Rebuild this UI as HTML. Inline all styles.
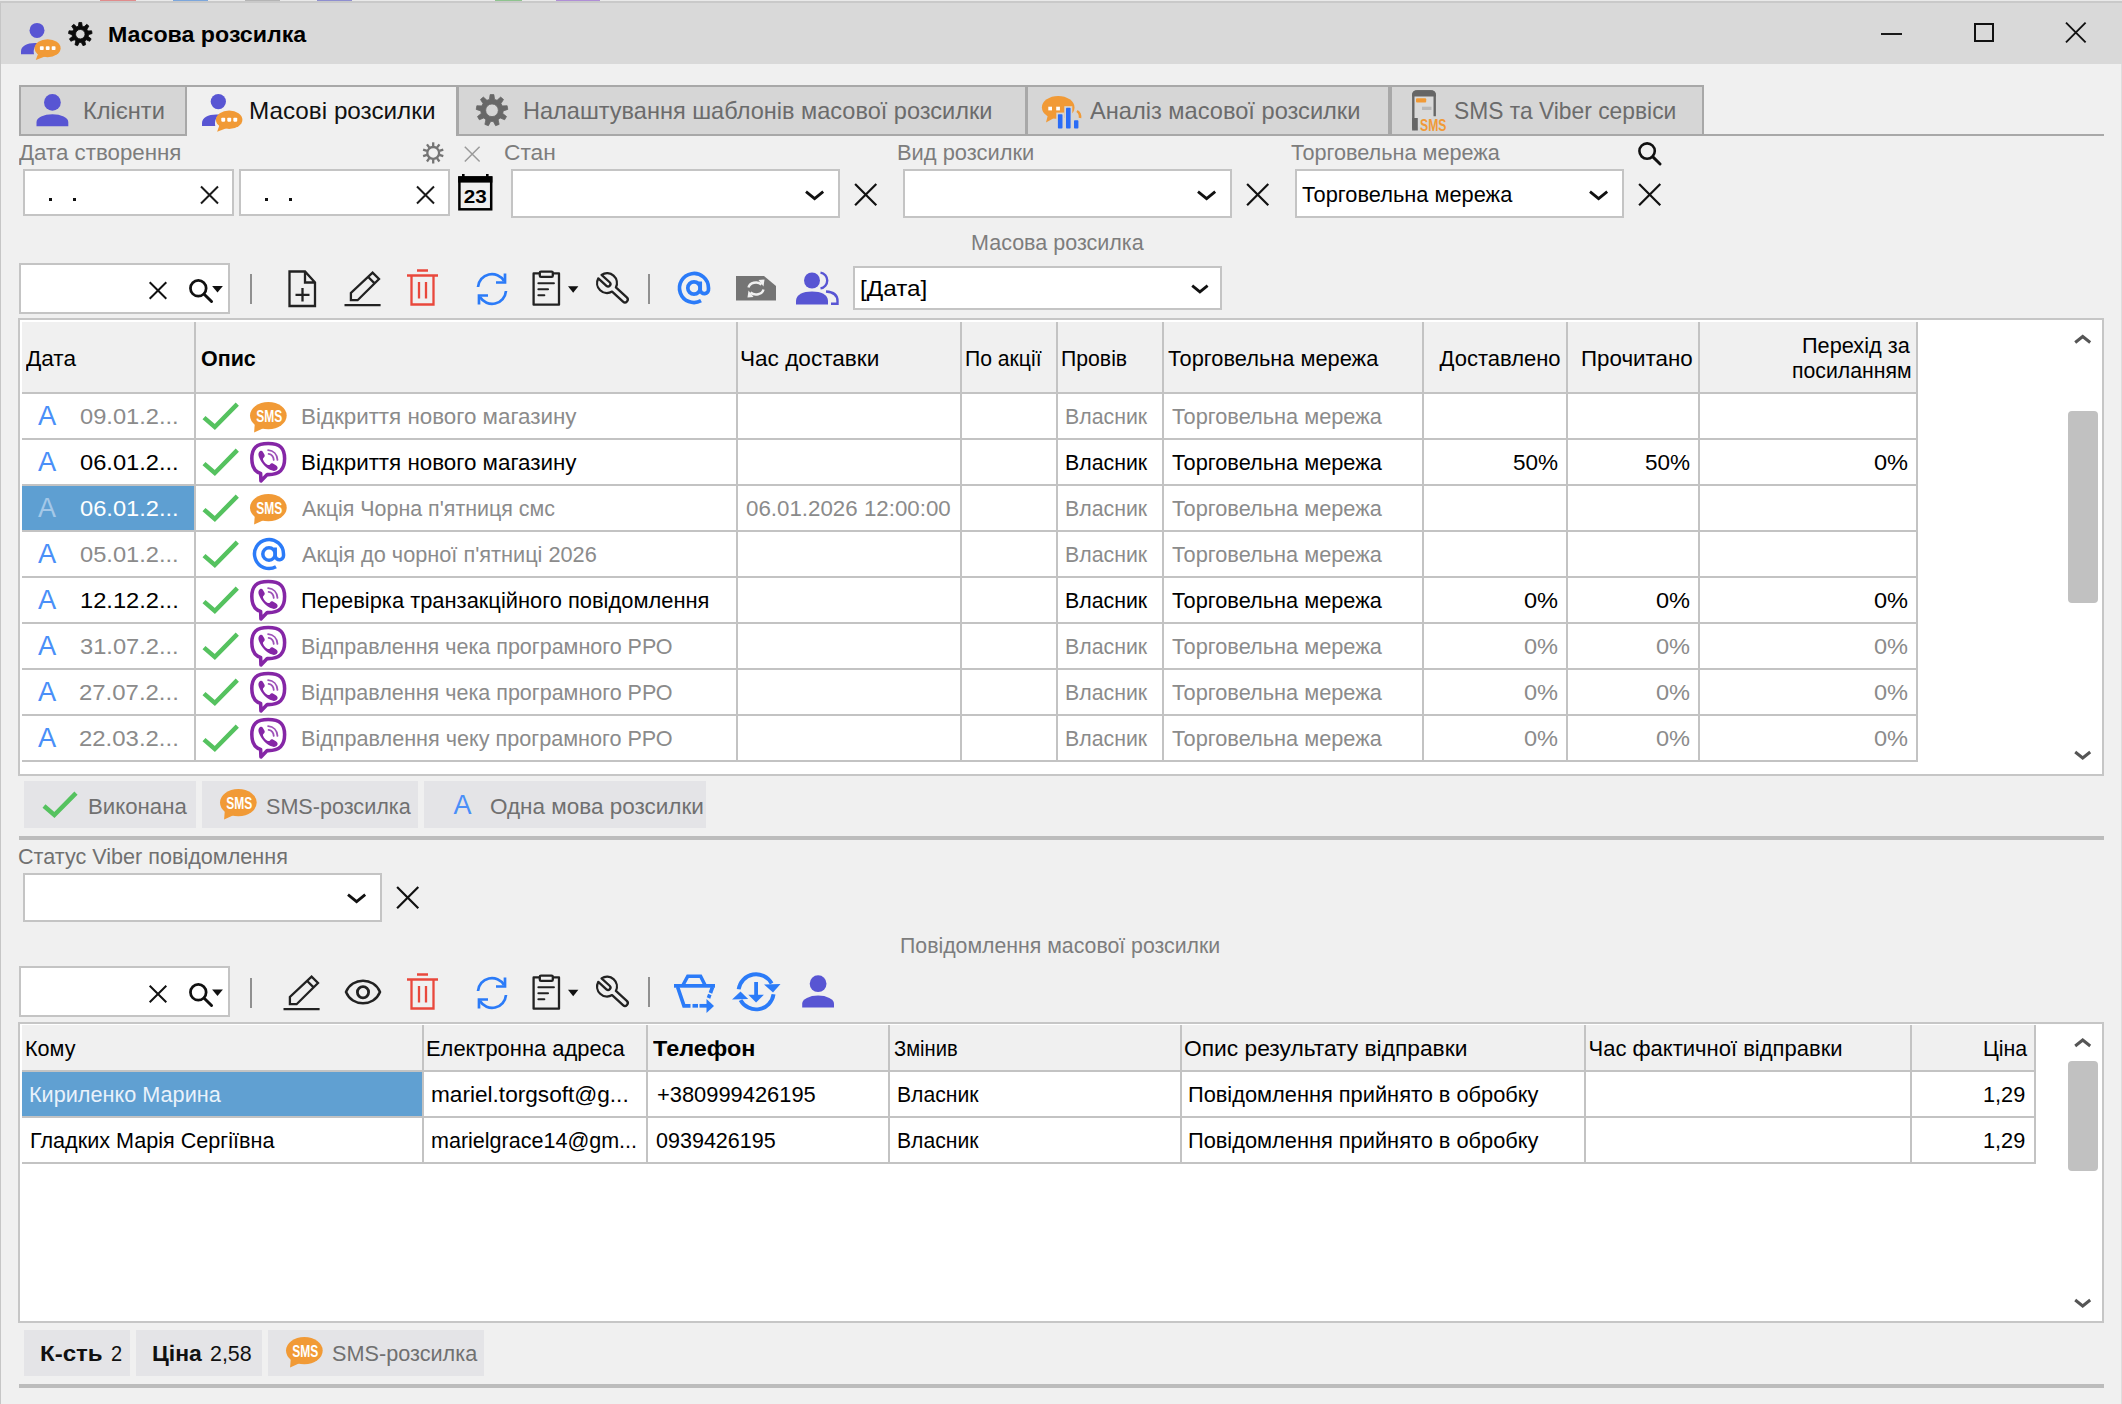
<!DOCTYPE html>
<html lang="uk"><head><meta charset="utf-8"><title>Масова розсилка</title>
<style>
html,body{margin:0;padding:0}
body{width:2122px;height:1404px;overflow:hidden;background:#f0f0f0;font-family:"Liberation Sans","DejaVu Sans",sans-serif;position:relative}
svg{overflow:visible}
.t{position:absolute;white-space:nowrap;transform-origin:0 50%}
.inp{position:absolute;background:#fff;border:2px solid #c4c4c4;box-sizing:border-box}
</style></head><body>

<div style="position:absolute;left:0px;top:0px;width:2122px;height:1px;background:#e9e9e9"></div>
<div style="position:absolute;left:0px;top:1px;width:2122px;height:2px;background:#c9c9c9"></div>
<div style="position:absolute;left:100px;top:0px;width:36px;height:1px;background:#e08c8c"></div>
<div style="position:absolute;left:173px;top:0px;width:35px;height:1px;background:#7da7dc"></div>
<div style="position:absolute;left:245px;top:0px;width:35px;height:1px;background:#b5b5b5"></div>
<div style="position:absolute;left:317px;top:0px;width:35px;height:1px;background:#8f8fd0"></div>
<div style="position:absolute;left:495px;top:0px;width:27px;height:1px;background:#8fc48f"></div>
<div style="position:absolute;left:556px;top:0px;width:44px;height:1px;background:#b08fd6"></div>
<div style="position:absolute;left:0px;top:3px;width:2122px;height:61px;background:#d9d9d9"></div>
<div style="position:absolute;left:0px;top:3px;width:1px;height:1404px;background:#c6c6c6"></div>
<div style="position:absolute;left:2120.5px;top:64px;width:1.5px;height:1404px;background:#dedede"></div>
<svg style="position:absolute;left:20px;top:22px" width="40" height="40" viewBox="0 0 40 40"><circle cx="17" cy="8.400" r="7.500" fill="#5855d3"/><path d="M1 32.300 V29.500 C1 24 7 21 15 21 L19 21 C15 23 13 27 14 32.300 Z" fill="#5855d3"/><ellipse cx="27.600" cy="26.200" rx="13" ry="9" fill="#f19a36"/><path d="M18.500 30.500 L15.800 38 L25.500 34.200 Z" fill="#f19a36"/><rect x="19.900" y="24.300" width="3.800" height="3.800" rx="0.8" fill="#fff"/><rect x="25.800" y="24.300" width="3.800" height="3.800" rx="0.8" fill="#fff"/><rect x="31.700" y="24.300" width="3.800" height="3.800" rx="0.8" fill="#fff"/></svg>
<svg style="position:absolute;left:67px;top:21px" width="27" height="27" viewBox="67 21 27 27"><path fill-rule="evenodd" d="M78.9 22.48 L81.7 22.48 L82.19 26.16 L84.02 26.83 L86.76 24.33 L88.9 26.12 L86.91 29.25 L87.89 30.95 L91.6 30.79 L92.08 33.54 L88.55 34.66 L88.21 36.59 L91.15 38.85 L89.75 41.27 L86.32 39.85 L84.82 41.11 L85.62 44.73 L82.99 45.69 L81.28 42.4 L79.32 42.4 L77.61 45.69 L74.98 44.73 L75.78 41.11 L74.28 39.85 L70.85 41.27 L69.45 38.85 L72.39 36.59 L72.05 34.66 L68.52 33.54 L69 30.79 L72.71 30.95 L73.69 29.25 L71.7 26.12 L73.84 24.33 L76.58 26.83 L78.41 26.16 Z M85.02 34.2 A4.72 4.72 0 1 0 75.58 34.2 A4.72 4.72 0 1 0 85.02 34.2 Z" fill="#0a0a0a" stroke="#0a0a0a" stroke-width="0.8" stroke-linejoin="round"/></svg>
<div class="t" style="left:107.95px;top:21px;font-size:22px;line-height:28px;color:#000;font-weight:bold;transform:scaleX(1.0543);">Масова розсилка</div>
<div style="position:absolute;left:1881px;top:33px;width:21px;height:2px;background:#1a1a1a"></div>
<div style="position:absolute;left:1973.7px;top:22.5px;width:20.2px;height:19.7px;border:2px solid #111;box-sizing:border-box"></div>
<svg style="position:absolute;left:2064px;top:20px" width="24" height="24" viewBox="2064 20 24 24"><path d="M2066 22.7 L2085.6 42.3 M2085.6 22.7 L2066 42.3" stroke="#111" stroke-width="1.9" fill="none"/></svg>
<div style="position:absolute;left:18.5px;top:134.3px;width:2085px;height:2px;background:#a8a8a8"></div>
<div style="position:absolute;left:18.5px;top:84.5px;width:168.5px;height:51.5px;background:#d6d6d6;border:2px solid #a8a8a8;box-sizing:border-box"></div>
<div style="position:absolute;left:185px;top:84.5px;width:273px;height:51.5px;background:#f0f0f0;border:2px solid #a8a8a8;border-bottom:none;box-sizing:border-box"></div>
<div style="position:absolute;left:457px;top:84.5px;width:570px;height:51.5px;background:#d6d6d6;border:2px solid #a8a8a8;box-sizing:border-box"></div>
<div style="position:absolute;left:1025.7px;top:84.5px;width:364.7px;height:51.5px;background:#d6d6d6;border:2px solid #a8a8a8;box-sizing:border-box"></div>
<div style="position:absolute;left:1389.8px;top:84.5px;width:313.9px;height:51.5px;background:#d6d6d6;border:2px solid #a8a8a8;box-sizing:border-box"></div>
<svg style="position:absolute;left:34px;top:92px" width="36" height="40" viewBox="34 92 36 40"><circle cx="52.4" cy="102.4" r="8.4" fill="#5855d3"/><path d="M36.5 126.3 V122.2 A15.9 7.9 0 0 1 68.3 122.2 V126.3 Z" fill="#5855d3"/></svg>
<div class="t" style="left:83.02px;top:95.5px;font-size:24px;line-height:30px;color:#6b6b6b;transform:scaleX(0.9838);">Клієнти</div>
<svg style="position:absolute;left:201px;top:93px" width="40.8" height="40.8" viewBox="0 0 40 40"><circle cx="17" cy="8.400" r="7.500" fill="#5855d3"/><path d="M1 32.300 V29.500 C1 24 7 21 15 21 L19 21 C15 23 13 27 14 32.300 Z" fill="#5855d3"/><ellipse cx="27.600" cy="26.200" rx="13" ry="9" fill="#f19a36"/><path d="M18.500 30.500 L15.800 38 L25.500 34.200 Z" fill="#f19a36"/><rect x="19.900" y="24.300" width="3.800" height="3.800" rx="0.8" fill="#fff"/><rect x="25.800" y="24.300" width="3.800" height="3.800" rx="0.8" fill="#fff"/><rect x="31.700" y="24.300" width="3.800" height="3.800" rx="0.8" fill="#fff"/></svg>
<div class="t" style="left:248.99px;top:95.5px;font-size:24px;line-height:30px;color:#111;transform:scaleX(1.0107);">Масові розсилки</div>
<svg style="position:absolute;left:475px;top:93px" width="35" height="35" viewBox="475 93 35 35"><path fill-rule="evenodd" d="M490.13 94.61 L493.87 94.61 L494.56 99.38 L497.06 100.29 L500.65 97.08 L503.52 99.48 L500.98 103.58 L502.31 105.88 L507.13 105.73 L507.78 109.42 L503.2 110.93 L502.74 113.54 L506.52 116.52 L504.65 119.76 L500.18 117.98 L498.14 119.69 L499.12 124.4 L495.61 125.68 L493.33 121.44 L490.67 121.44 L488.39 125.68 L484.88 124.4 L485.86 119.69 L483.82 117.98 L479.35 119.76 L477.48 116.52 L481.26 113.54 L480.8 110.93 L476.22 109.42 L476.87 105.73 L481.69 105.88 L483.02 103.58 L480.48 99.48 L483.35 97.08 L486.94 100.29 L489.44 99.38 Z M498.32 110.3 A6.32 6.32 0 1 0 485.68 110.3 A6.32 6.32 0 1 0 498.32 110.3 Z" fill="#686868" stroke="#686868" stroke-width="0.8" stroke-linejoin="round"/></svg>
<div class="t" style="left:523.02px;top:95.5px;font-size:24px;line-height:30px;color:#6b6b6b;transform:scaleX(0.9808);">Налаштування шаблонів масової розсилки</div>
<svg style="position:absolute;left:1040px;top:94px" width="44" height="38" viewBox="1040 94 44 38"><ellipse cx="1058.200" cy="107.400" rx="16.300" ry="11.400" fill="#f19a36"/><path d="M1048 114.500 L1046 122.600 L1055 117.500 Z" fill="#f19a36"/><path d="M1077 111 C1079.500 112.500 1080.300 115 1080 118" fill="none" stroke="#f19a36" stroke-width="2.600"/><rect x="1056.300" y="112.600" width="8" height="17" fill="#d6d6d6"/><rect x="1064.300" y="106.200" width="8" height="24" fill="#d6d6d6"/><rect x="1072.300" y="118.600" width="7.800" height="11" fill="#d6d6d6"/><rect x="1048.300" y="106.700" width="3.700" height="3.700" fill="#fff"/><rect x="1056.200" y="106.700" width="3.700" height="3.700" fill="#fff"/><rect x="1057.900" y="114.200" width="4.600" height="14.300" rx="0.800" fill="#2a6cf6"/><rect x="1066" y="107.800" width="4.600" height="20.700" rx="0.800" fill="#2a6cf6"/><rect x="1074" y="120.200" width="4.400" height="8.300" rx="0.800" fill="#2a6cf6"/></svg>
<div class="t" style="left:1090px;top:95.5px;font-size:24px;line-height:30px;color:#6b6b6b;transform:scaleX(0.9842);">Аналіз масової розсилки</div>
<svg style="position:absolute;left:1408px;top:86px" width="44" height="48" viewBox="1408 86 44 48"><path d="M1413.300 130.600 V95 C1413.300 92.800 1414.800 91.500 1417.300 91.500 H1430.700 C1433.200 91.500 1434.700 92.800 1434.700 95 V116.300" fill="#dadada" stroke="#666" stroke-width="2.400"/><path d="M1413.300 95.200 V95 C1413.300 92.800 1414.800 91.500 1417.300 91.500 H1430.700 C1433.200 91.500 1434.700 92.800 1434.700 95 V95.200 Z" fill="#666" stroke="#666" stroke-width="2.400"/><path d="M1412.100 118 H1417.800 V130.600 H1414.500 L1412.100 128 Z" fill="#666"/><rect x="1416" y="98.200" width="10.200" height="4.400" rx="1" fill="#f19a36"/><rect x="1422" y="106.700" width="9.500" height="3.300" fill="#b9b9b9"/><text x="1433.200" y="130.600" font-family="Liberation Sans,sans-serif" font-weight="bold" font-size="17.400" fill="#f19a36" text-anchor="middle" textLength="26.400" lengthAdjust="spacingAndGlyphs">SMS</text></svg>
<div class="t" style="left:1454.05px;top:95.5px;font-size:24px;line-height:30px;color:#6b6b6b;transform:scaleX(0.9505);">SMS та Viber сервіси</div>
<div class="t" style="left:19px;top:139px;font-size:22px;line-height:28px;color:#7d7d7d;transform:scaleX(1.0135);">Дата створення</div>
<svg style="position:absolute;left:421px;top:140px" width="24" height="24" viewBox="421 140 24 24"><circle cx="433.2" cy="152.9" r="5.9" fill="none" stroke="#747474" stroke-width="2.3"/><path d="M433.2 146.4 L433.2 142.3" stroke="#747474" stroke-width="2.3"/><path d="M437.02 147.64 L439.43 144.32" stroke="#747474" stroke-width="2.3"/><path d="M439.38 150.89 L443.28 149.62" stroke="#747474" stroke-width="2.3"/><path d="M439.38 154.91 L443.28 156.18" stroke="#747474" stroke-width="2.3"/><path d="M437.02 158.16 L439.43 161.48" stroke="#747474" stroke-width="2.3"/><path d="M433.2 159.4 L433.2 163.5" stroke="#747474" stroke-width="2.3"/><path d="M429.38 158.16 L426.97 161.48" stroke="#747474" stroke-width="2.3"/><path d="M427.02 154.91 L423.12 156.18" stroke="#747474" stroke-width="2.3"/><path d="M427.02 150.89 L423.12 149.62" stroke="#747474" stroke-width="2.3"/><path d="M429.38 147.64 L426.97 144.32" stroke="#747474" stroke-width="2.3"/></svg>
<svg style="position:absolute;left:462px;top:144px" width="19" height="19" viewBox="462 144 19 19"><path d="M464.8 146.7 L479.6 161.5 M479.6 146.7 L464.8 161.5" stroke="#9a9a9a" stroke-width="1.5" fill="none"/></svg>
<div class="t" style="left:504.47px;top:139px;font-size:22px;line-height:28px;color:#7d7d7d;transform:scaleX(1.0323);">Стан</div>
<div class="t" style="left:896.51px;top:139px;font-size:22px;line-height:28px;color:#7d7d7d;transform:scaleX(0.9946);">Вид розсилки</div>
<div class="t" style="left:1290.5px;top:139px;font-size:22px;line-height:28px;color:#7d7d7d;transform:scaleX(0.9835);">Торговельна мережа</div>
<svg style="position:absolute;left:1637.3px;top:140.8px" width="25" height="25" viewBox="0 0 26 26"><circle cx="10.5" cy="10.500" r="8" fill="none" stroke="#111" stroke-width="2.7"/><path d="M16.5 16.500 L24 24" stroke="#111" stroke-width="3.0" stroke-linecap="round"/></svg>
<div class="inp" style="left:23px;top:169px;width:211px;height:46.5px"></div>
<div class="inp" style="left:239px;top:169px;width:211px;height:46.5px"></div>
<div style="position:absolute;left:48.5px;top:198.4px;width:3px;height:3px;background:#111"></div>
<div style="position:absolute;left:73px;top:198.4px;width:3px;height:3px;background:#111"></div>
<svg style="position:absolute;left:199px;top:184px" width="21" height="21" viewBox="199 184 21 21"><path d="M201 186.5 L218 203.5 M218 186.5 L201 203.5" stroke="#1a1a1a" stroke-width="2" fill="none"/></svg>
<div style="position:absolute;left:264.5px;top:198.4px;width:3px;height:3px;background:#111"></div>
<div style="position:absolute;left:289px;top:198.4px;width:3px;height:3px;background:#111"></div>
<svg style="position:absolute;left:415px;top:184px" width="21" height="21" viewBox="415 184 21 21"><path d="M417 186.5 L434 203.5 M434 186.5 L417 203.5" stroke="#1a1a1a" stroke-width="2" fill="none"/></svg>
<svg style="position:absolute;left:456px;top:172px" width="40" height="42" viewBox="456 172 40 42"><rect x="459.400" y="177.500" width="31.800" height="31.800" fill="#efefef" stroke="#000" stroke-width="2.500"/><rect x="458.200" y="176.300" width="34.200" height="6.300" fill="#000"/><rect x="462" y="174" width="2.600" height="3" fill="#000"/><rect x="486" y="174" width="2.600" height="3" fill="#000"/><text x="475.200" y="203.300" font-family="Liberation Sans,sans-serif" font-weight="bold" font-size="18.5" fill="#000" text-anchor="middle" textLength="23" lengthAdjust="spacingAndGlyphs">23</text></svg>
<div class="inp" style="left:511px;top:168.8px;width:329px;height:49px"></div>
<svg style="position:absolute;left:803px;top:185px" width="24" height="20" viewBox="803 185 24 20"><path d="M806 191.7 L814.6 198.7 L823.2 191.7" stroke="#111" stroke-width="2.8" fill="none"/></svg>
<svg style="position:absolute;left:853px;top:182px" width="26" height="26" viewBox="853 182 26 26"><path d="M855.1 184 L876.3 205.2 M876.3 184 L855.1 205.2" stroke="#111" stroke-width="2.2" fill="none"/></svg>
<div class="inp" style="left:903px;top:168.8px;width:329px;height:49px"></div>
<svg style="position:absolute;left:1195px;top:185px" width="24" height="20" viewBox="1195 185 24 20"><path d="M1198 191.7 L1206.6 198.7 L1215.2 191.7" stroke="#111" stroke-width="2.8" fill="none"/></svg>
<svg style="position:absolute;left:1245px;top:182px" width="26" height="26" viewBox="1245 182 26 26"><path d="M1247.1 184 L1268.3 205.2 M1268.3 184 L1247.1 205.2" stroke="#111" stroke-width="2.2" fill="none"/></svg>
<div class="inp" style="left:1295px;top:168.8px;width:329px;height:49px"></div>
<div class="t" style="left:1301.5px;top:181px;font-size:22px;line-height:28px;color:#000;transform:scaleX(0.9906);">Торговельна мережа</div>
<svg style="position:absolute;left:1587px;top:185px" width="24" height="20" viewBox="1587 185 24 20"><path d="M1590 191.7 L1598.6 198.7 L1607.2 191.7" stroke="#111" stroke-width="2.8" fill="none"/></svg>
<svg style="position:absolute;left:1637px;top:182px" width="26" height="26" viewBox="1637 182 26 26"><path d="M1639.1 184 L1660.3 205.2 M1660.3 184 L1639.1 205.2" stroke="#111" stroke-width="2.2" fill="none"/></svg>
<div class="t" style="left:971.02px;top:228.7px;font-size:22px;line-height:28px;color:#7d7d7d;transform:scaleX(0.9780);">Масова розсилка</div>
<div class="inp" style="left:18.5px;top:262.7px;width:211.7px;height:51.2px"></div>
<svg style="position:absolute;left:147px;top:280px" width="21" height="21" viewBox="147 280 21 21"><path d="M149.7 282.2 L166.3 298.8 M166.3 282.2 L149.7 298.8" stroke="#111" stroke-width="2" fill="none"/></svg>
<svg style="position:absolute;left:187.8px;top:278px" width="25.5" height="25.5" viewBox="0 0 26 26"><circle cx="10.5" cy="10.500" r="8" fill="none" stroke="#111" stroke-width="2.8"/><path d="M16.5 16.500 L24 24" stroke="#111" stroke-width="3.0" stroke-linecap="round"/></svg>
<svg style="position:absolute;left:211px;top:285px" width="13.8" height="9.4" viewBox="211 285 13.8 9.4"><path d="M212.1 286 L222.9 286 L217.5 292.4 Z" fill="#111"/></svg>
<div style="position:absolute;left:250.3px;top:274.2px;width:2px;height:30px;background:#909090"></div>
<svg style="position:absolute;left:288px;top:270px" width="30" height="38" viewBox="0 0 30 38"><path d="M1.5 1.500 H17 L27 12.500 V36 H1.5 Z M17 1.500 V12.500 H27" fill="none" stroke="#222" stroke-width="2.3" stroke-linejoin="miter"/><path d="M14.5 18 V31.500 M7.500 24.800 H21.500" stroke="#222" stroke-width="2.3"/></svg>
<svg style="position:absolute;left:345px;top:270px" width="38" height="38" viewBox="0 0 38 38"><path d="M5.900 30.200 V23 L27.600 2.700 L34 9 L12.600 30.200 Z M23.200 7 L29.600 13.400" fill="none" stroke="#222" stroke-width="2.3" stroke-linejoin="miter"/><path d="M-0.500 35.100 H35.600" stroke="#222" stroke-width="2.3"/></svg>
<svg style="position:absolute;left:407px;top:269px" width="31" height="38" viewBox="0 0 31 38"><path d="M0 6.500 H31 M10 1.500 H21 M4.500 6.500 V35.500 H26.500 V6.500 M12 13 V29.500 M19 13 V29.500" fill="none" stroke="#e9483c" stroke-width="2.3"/></svg>
<svg style="position:absolute;left:475px;top:272px" width="34" height="34" viewBox="0 0 34 34"><path d="M3 15 A14 14 0 0 1 29 9" fill="none" stroke="#2b7bf8" stroke-width="2.7"/><path d="M30 1.500 V10.500 H21" fill="none" stroke="#2b7bf8" stroke-width="2.7"/><path d="M31 19 A14 14 0 0 1 5 25" fill="none" stroke="#2b7bf8" stroke-width="2.7"/><path d="M4 32.500 V23.500 H13" fill="none" stroke="#2b7bf8" stroke-width="2.7"/></svg>
<svg style="position:absolute;left:530px;top:268px" width="34" height="40" viewBox="530 268 34 40"><g transform="translate(0 0)"><path d="M539.800 273.400 H533.600 V304.700 H559 V273.400 H552.800" fill="none" stroke="#222" stroke-width="2.3" stroke-linejoin="round"/><rect x="539.800" y="271.600" width="13" height="5.300" rx="1.200" fill="none" stroke="#222" stroke-width="2.3"/><path d="M538.400 283.200 H553.900 M538.400 289.300 H548 M538.400 295.300 H544.300" stroke="#222" stroke-width="2.1" stroke-linecap="round"/></g></svg>
<svg style="position:absolute;left:567px;top:285px" width="13.4" height="9.5" viewBox="567 285 13.4 9.5"><path d="M568 286.35 L578.4 286.35 L573.2 292.85 Z" fill="#111"/></svg>
<svg style="position:absolute;left:593px;top:269px" width="44" height="44" viewBox="593 269 44 44"><path d="M-9.6 -2.4 L1.4 -2.4 A2.4 2.4 0 0 1 1.4 2.4 L-9.6 2.4 A9.9 9.9 0 0 0 9.5 2.8 L24.3 2.8 A2.8 2.8 0 0 0 24.3 -2.8 L9.5 -2.8 A9.9 9.9 0 0 0 -9.6 -2.4 Z" fill="none" stroke="#222" stroke-width="2.3" stroke-linejoin="round" transform="translate(607 283.1) rotate(42.5)"/></svg>
<div style="position:absolute;left:648.3px;top:273.5px;width:2px;height:30px;background:#909090"></div>
<svg style="position:absolute;left:677px;top:271px" width="34" height="34" viewBox="0 0 34 34"><circle cx="17" cy="17" r="6.200" fill="none" stroke="#2b7bf8" stroke-width="3.7"/><path d="M23.200 10.500 V19 A4 4 0 0 0 31.500 18 V17 A14.500 14.500 0 1 0 24 29.700" fill="none" stroke="#2b7bf8" stroke-width="3.7" stroke-linecap="butt"/></svg>
<svg style="position:absolute;left:736px;top:276px" width="40" height="25" viewBox="0 0 40 25"><path d="M0 0 H28 L40 10 V24.500 H0 Z" fill="#747474"/><path d="M12.500 11.500 A7.500 6 0 0 1 25.500 8.500" fill="none" stroke="#f0f0f0" stroke-width="2.4"/><path d="M22.500 4 L28.500 3.500 L27.500 10.500 Z" fill="#f0f0f0"/><path d="M27.500 13.500 A7.500 6 0 0 1 14.500 16.500" fill="none" stroke="#f0f0f0" stroke-width="2.4"/><path d="M17.500 21 L11.500 21.500 L12.500 14.500 Z" fill="#f0f0f0"/></svg>
<svg style="position:absolute;left:796px;top:270.5px" width="44" height="35" viewBox="0 0 44 35"><path d="M24.5 1.600 A8 8 0 0 1 24.500 17.400" fill="none" stroke="#5855d3" stroke-width="2.4"/><path d="M30 20.500 C38 21 41.500 25 41.500 30 V32.800 H35" fill="none" stroke="#5855d3" stroke-width="2.4"/><circle cx="16" cy="9.500" r="8" fill="#5855d3"/><path d="M0 33.500 V30 C0 23.500 7 20.500 16 20.500 C25 20.500 32 23.500 32 30 V33.500 Z" fill="#5855d3"/></svg>
<div class="inp" style="left:853px;top:266px;width:369px;height:44px"></div>
<div class="t" style="left:859.9px;top:274.5px;font-size:22px;line-height:28px;color:#000;transform:scaleX(1.1049);">[Дата]</div>
<svg style="position:absolute;left:1189px;top:279px" width="22" height="19" viewBox="1189 279 22 19"><path d="M1192.2 285.65 L1199.9 291.95 L1207.6 285.65" stroke="#111" stroke-width="2.8" fill="none"/></svg>
<div style="position:absolute;left:18.2px;top:318px;width:2085.7px;height:457.5px;background:#fff;border:2px solid #c6c6c6;box-sizing:border-box"></div>
<div style="position:absolute;left:22px;top:322px;width:1894px;height:70px;background:#f0f0f0"></div>
<div style="position:absolute;left:194px;top:322px;width:2px;height:439px;background:#c3c3c3"></div>
<div style="position:absolute;left:736px;top:322px;width:2px;height:439px;background:#c3c3c3"></div>
<div style="position:absolute;left:960px;top:322px;width:2px;height:439px;background:#c3c3c3"></div>
<div style="position:absolute;left:1056px;top:322px;width:2px;height:439px;background:#c3c3c3"></div>
<div style="position:absolute;left:1162px;top:322px;width:2px;height:439px;background:#c3c3c3"></div>
<div style="position:absolute;left:1422px;top:322px;width:2px;height:439px;background:#c3c3c3"></div>
<div style="position:absolute;left:1566px;top:322px;width:2px;height:439px;background:#c3c3c3"></div>
<div style="position:absolute;left:1698px;top:322px;width:2px;height:439px;background:#c3c3c3"></div>
<div style="position:absolute;left:1916px;top:322px;width:2px;height:439px;background:#c3c3c3"></div>
<div style="position:absolute;left:22px;top:392px;width:1896px;height:2px;background:#c3c3c3"></div>
<div style="position:absolute;left:22px;top:438px;width:1896px;height:2px;background:#c3c3c3"></div>
<div style="position:absolute;left:22px;top:484px;width:1896px;height:2px;background:#c3c3c3"></div>
<div style="position:absolute;left:22px;top:530px;width:1896px;height:2px;background:#c3c3c3"></div>
<div style="position:absolute;left:22px;top:576px;width:1896px;height:2px;background:#c3c3c3"></div>
<div style="position:absolute;left:22px;top:622px;width:1896px;height:2px;background:#c3c3c3"></div>
<div style="position:absolute;left:22px;top:668px;width:1896px;height:2px;background:#c3c3c3"></div>
<div style="position:absolute;left:22px;top:714px;width:1896px;height:2px;background:#c3c3c3"></div>
<div style="position:absolute;left:22px;top:760px;width:1896px;height:2px;background:#c3c3c3"></div>
<div class="t" style="left:26.2px;top:345px;font-size:22px;line-height:28px;color:#000;transform:scaleX(1.0267);">Дата</div>
<div class="t" style="left:200.5px;top:345px;font-size:22px;line-height:28px;color:#000;font-weight:bold;transform:scaleX(0.9745);">Опис</div>
<div class="t" style="left:740.47px;top:345px;font-size:22px;line-height:28px;color:#000;transform:scaleX(1.0265);">Час доставки</div>
<div class="t" style="left:964.54px;top:345px;font-size:22px;line-height:28px;color:#000;transform:scaleX(0.9617);">По акції</div>
<div class="t" style="left:1060.54px;top:345px;font-size:22px;line-height:28px;color:#000;transform:scaleX(0.9647);">Провів</div>
<div class="t" style="left:1167.5px;top:345px;font-size:22px;line-height:28px;color:#000;transform:scaleX(0.9906);">Торговельна мережа</div>
<div class="t" style="left:1439.5px;top:345px;font-size:22px;line-height:28px;color:#000;">Доставлено</div>
<div class="t" style="left:1580.98px;top:345px;font-size:22px;line-height:28px;color:#000;transform:scaleX(1.0160);">Прочитано</div>
<div class="t" style="left:1801.51px;top:331.5px;font-size:22px;line-height:28px;color:#000;transform:scaleX(0.9866);">Перехід за</div>
<div class="t" style="left:1791.53px;top:357px;font-size:22px;line-height:28px;color:#000;transform:scaleX(0.9653);">посиланням</div>
<div class="t" style="left:37.8px;top:401.1px;font-size:27px;line-height:30px;color:#4a8ff8;transform:scaleX(1.0111);">A</div>
<div class="t" style="left:80px;top:403.3px;font-size:22px;line-height:28px;color:#8b8b8b;transform:scaleX(1.0759);">09.01.2...</div>
<svg style="position:absolute;left:199.5px;top:399.8px" width="44" height="34" viewBox="199.5 399.8 44 34"><path d="M203.5 417.4 L214.3 426.8 L236.8 404" fill="none" stroke="#55c25f" stroke-width="4.5" stroke-linejoin="miter"/></svg>
<svg style="position:absolute;left:248px;top:400.2px" width="42" height="36" viewBox="248 400.2 42 36"><rect x="250" y="402.2" width="36.700" height="27.200" rx="18.300" ry="13.600" fill="#f19a36"/><path d="M255 421.2 L254.1 432.6 L265 427.7 Z" fill="#f19a36"/><text x="269.2" y="422.2" font-family="Liberation Sans,sans-serif" font-weight="bold" font-size="16.5" fill="#fff" text-anchor="middle" textLength="26" lengthAdjust="spacingAndGlyphs">SMS</text></svg>
<div class="t" style="left:300.98px;top:403.3px;font-size:22px;line-height:28px;color:#8b8b8b;transform:scaleX(1.0163);">Відкриття нового магазину</div>
<div class="t" style="left:1065.03px;top:403.3px;font-size:22px;line-height:28px;color:#8b8b8b;transform:scaleX(0.9681);">Власник</div>
<div class="t" style="left:1172px;top:403.3px;font-size:22px;line-height:28px;color:#8b8b8b;transform:scaleX(0.9887);">Торговельна мережа</div>
<div class="t" style="left:37.8px;top:447.1px;font-size:27px;line-height:30px;color:#4a8ff8;transform:scaleX(1.0111);">A</div>
<div class="t" style="left:80px;top:449.3px;font-size:22px;line-height:28px;color:#000;transform:scaleX(1.0759);">06.01.2...</div>
<svg style="position:absolute;left:199.5px;top:445.8px" width="44" height="34" viewBox="199.5 445.8 44 34"><path d="M203.5 463.4 L214.3 472.8 L236.8 450" fill="none" stroke="#55c25f" stroke-width="4.5" stroke-linejoin="miter"/></svg>
<svg style="position:absolute;left:248.4px;top:438.5px" width="42" height="46" viewBox="248.4 438.5 42 46"><g transform="translate(250.4 441.2) scale(1.012 1.022)"><path d="M18 1.800 C6 1.800 1.800 6.500 1.800 16.500 C1.800 25 5 29.500 10.500 31 L10.800 38.500 L17 32.200 C29.500 32.500 34.200 27 34.200 16.500 C34.200 6.500 30 1.800 18 1.800 Z" fill="#fff" stroke="#8526a6" stroke-width="3.500" stroke-linejoin="round"/><g transform="translate(17.900 18.300) scale(1.05) translate(-18.500 -17)"><path d="M11 8.300 C9.300 9.300 9 11.500 9.800 13.500 C12 19.500 16.500 24.200 22.500 26.500 C24.300 27.200 26.500 26.500 27.300 24.800 C27.800 23.500 27 22.300 25.800 21.600 L23 20 C22 19.500 21 19.800 20.500 20.500 C19.800 21.500 18.800 21.500 17.800 21 C15.800 19.800 14.500 18 13.800 16.300 C13.400 15.300 13.800 14.700 14.500 14.200 C15.500 13.500 15.500 12.500 15 11.500 L13.500 8.900 C12.900 7.900 11.800 7.800 11 8.300 Z" fill="#8526a6"/><path d="M18.500 7.500 C23.500 8 27 11.500 27.300 16.500 M19 11 C21.800 11.500 23.600 13.500 23.800 16.500" fill="none" stroke="#8526a6" stroke-width="1.700" stroke-linecap="round" opacity="0.8"/></g></g></svg>
<div class="t" style="left:300.98px;top:449.3px;font-size:22px;line-height:28px;color:#000;transform:scaleX(1.0163);">Відкриття нового магазину</div>
<div class="t" style="left:1065.03px;top:449.3px;font-size:22px;line-height:28px;color:#000;transform:scaleX(0.9681);">Власник</div>
<div class="t" style="left:1172px;top:449.3px;font-size:22px;line-height:28px;color:#000;transform:scaleX(0.9887);">Торговельна мережа</div>
<div class="t" style="left:1512.5px;top:449.3px;font-size:22px;line-height:28px;color:#000;transform:scaleX(1.0237);">50%</div>
<div class="t" style="left:1644.5px;top:449.3px;font-size:22px;line-height:28px;color:#000;transform:scaleX(1.0237);">50%</div>
<div class="t" style="left:1873.5px;top:449.3px;font-size:22px;line-height:28px;color:#000;transform:scaleX(1.0725);">0%</div>
<div style="position:absolute;left:22px;top:486px;width:172px;height:44px;background:#5e9fd2"></div>
<div class="t" style="left:38px;top:493.1px;font-size:27px;line-height:30px;color:#a4c8e8;">A</div>
<div class="t" style="left:80px;top:495.3px;font-size:22px;line-height:28px;color:#fff;transform:scaleX(1.0759);">06.01.2...</div>
<svg style="position:absolute;left:199.5px;top:491.8px" width="44" height="34" viewBox="199.5 491.8 44 34"><path d="M203.5 509.4 L214.3 518.8 L236.8 496" fill="none" stroke="#55c25f" stroke-width="4.5" stroke-linejoin="miter"/></svg>
<svg style="position:absolute;left:248px;top:492.2px" width="42" height="36" viewBox="248 492.2 42 36"><rect x="250" y="494.2" width="36.700" height="27.200" rx="18.300" ry="13.600" fill="#f19a36"/><path d="M255 513.2 L254.1 524.6 L265 519.7 Z" fill="#f19a36"/><text x="269.2" y="514.2" font-family="Liberation Sans,sans-serif" font-weight="bold" font-size="16.5" fill="#fff" text-anchor="middle" textLength="26" lengthAdjust="spacingAndGlyphs">SMS</text></svg>
<div class="t" style="left:302px;top:495.3px;font-size:22px;line-height:28px;color:#8b8b8b;transform:scaleX(0.9741);">Акція Чорна п'ятниця смс</div>
<div class="t" style="left:745.5px;top:495.3px;font-size:22px;line-height:28px;color:#8b8b8b;transform:scaleX(1.0143);">06.01.2026 12:00:00</div>
<div class="t" style="left:1065.03px;top:495.3px;font-size:22px;line-height:28px;color:#8b8b8b;transform:scaleX(0.9681);">Власник</div>
<div class="t" style="left:1172px;top:495.3px;font-size:22px;line-height:28px;color:#8b8b8b;transform:scaleX(0.9887);">Торговельна мережа</div>
<div class="t" style="left:37.8px;top:539.1px;font-size:27px;line-height:30px;color:#4a8ff8;transform:scaleX(1.0111);">A</div>
<div class="t" style="left:80px;top:541.3px;font-size:22px;line-height:28px;color:#8b8b8b;transform:scaleX(1.0759);">05.01.2...</div>
<svg style="position:absolute;left:199.5px;top:537.8px" width="44" height="34" viewBox="199.5 537.8 44 34"><path d="M203.5 555.4 L214.3 564.8 L236.8 542" fill="none" stroke="#55c25f" stroke-width="4.5" stroke-linejoin="miter"/></svg>
<svg style="position:absolute;left:252px;top:537px" width="34" height="34" viewBox="0 0 34 34"><circle cx="17" cy="17" r="6.200" fill="none" stroke="#2b7bf8" stroke-width="3.5"/><path d="M23.200 10.500 V19 A4 4 0 0 0 31.500 18 V17 A14.500 14.500 0 1 0 24 29.700" fill="none" stroke="#2b7bf8" stroke-width="3.5" stroke-linecap="butt"/></svg>
<div class="t" style="left:302px;top:541.3px;font-size:22px;line-height:28px;color:#8b8b8b;transform:scaleX(0.9870);">Акція до чорної п'ятниці 2026</div>
<div class="t" style="left:1065.03px;top:541.3px;font-size:22px;line-height:28px;color:#8b8b8b;transform:scaleX(0.9681);">Власник</div>
<div class="t" style="left:1172px;top:541.3px;font-size:22px;line-height:28px;color:#8b8b8b;transform:scaleX(0.9887);">Торговельна мережа</div>
<div class="t" style="left:37.8px;top:585.1px;font-size:27px;line-height:30px;color:#4a8ff8;transform:scaleX(1.0111);">A</div>
<div class="t" style="left:79.92px;top:587.3px;font-size:22px;line-height:28px;color:#000;transform:scaleX(1.0767);">12.12.2...</div>
<svg style="position:absolute;left:199.5px;top:583.8px" width="44" height="34" viewBox="199.5 583.8 44 34"><path d="M203.5 601.4 L214.3 610.8 L236.8 588" fill="none" stroke="#55c25f" stroke-width="4.5" stroke-linejoin="miter"/></svg>
<svg style="position:absolute;left:248.4px;top:576.5px" width="42" height="46" viewBox="248.4 576.5 42 46"><g transform="translate(250.4 579.2) scale(1.012 1.022)"><path d="M18 1.800 C6 1.800 1.800 6.500 1.800 16.500 C1.800 25 5 29.500 10.500 31 L10.800 38.500 L17 32.200 C29.500 32.500 34.200 27 34.200 16.500 C34.200 6.500 30 1.800 18 1.800 Z" fill="#fff" stroke="#8526a6" stroke-width="3.500" stroke-linejoin="round"/><g transform="translate(17.900 18.300) scale(1.05) translate(-18.500 -17)"><path d="M11 8.300 C9.300 9.300 9 11.500 9.800 13.500 C12 19.500 16.500 24.200 22.500 26.500 C24.300 27.200 26.500 26.500 27.300 24.800 C27.800 23.500 27 22.300 25.800 21.600 L23 20 C22 19.500 21 19.800 20.500 20.500 C19.800 21.500 18.800 21.500 17.800 21 C15.800 19.800 14.500 18 13.800 16.300 C13.400 15.300 13.800 14.700 14.500 14.200 C15.500 13.500 15.500 12.500 15 11.500 L13.500 8.900 C12.900 7.900 11.800 7.800 11 8.300 Z" fill="#8526a6"/><path d="M18.500 7.500 C23.500 8 27 11.500 27.300 16.500 M19 11 C21.800 11.500 23.600 13.500 23.800 16.500" fill="none" stroke="#8526a6" stroke-width="1.700" stroke-linecap="round" opacity="0.8"/></g></g></svg>
<div class="t" style="left:301.01px;top:587.3px;font-size:22px;line-height:28px;color:#000;transform:scaleX(0.9944);">Перевірка транзакційного повідомлення</div>
<div class="t" style="left:1065.03px;top:587.3px;font-size:22px;line-height:28px;color:#000;transform:scaleX(0.9681);">Власник</div>
<div class="t" style="left:1172px;top:587.3px;font-size:22px;line-height:28px;color:#000;transform:scaleX(0.9887);">Торговельна мережа</div>
<div class="t" style="left:1523.5px;top:587.3px;font-size:22px;line-height:28px;color:#000;transform:scaleX(1.0725);">0%</div>
<div class="t" style="left:1655.5px;top:587.3px;font-size:22px;line-height:28px;color:#000;transform:scaleX(1.0725);">0%</div>
<div class="t" style="left:1873.5px;top:587.3px;font-size:22px;line-height:28px;color:#000;transform:scaleX(1.0725);">0%</div>
<div class="t" style="left:37.8px;top:631.1px;font-size:27px;line-height:30px;color:#4a8ff8;transform:scaleX(1.0111);">A</div>
<div class="t" style="left:80px;top:633.3px;font-size:22px;line-height:28px;color:#8b8b8b;transform:scaleX(1.0759);">31.07.2...</div>
<svg style="position:absolute;left:199.5px;top:629.8px" width="44" height="34" viewBox="199.5 629.8 44 34"><path d="M203.5 647.4 L214.3 656.8 L236.8 634" fill="none" stroke="#55c25f" stroke-width="4.5" stroke-linejoin="miter"/></svg>
<svg style="position:absolute;left:248.4px;top:622.5px" width="42" height="46" viewBox="248.4 622.5 42 46"><g transform="translate(250.4 625.2) scale(1.012 1.022)"><path d="M18 1.800 C6 1.800 1.800 6.500 1.800 16.500 C1.800 25 5 29.500 10.500 31 L10.800 38.500 L17 32.200 C29.500 32.500 34.200 27 34.200 16.500 C34.200 6.500 30 1.800 18 1.800 Z" fill="#fff" stroke="#8526a6" stroke-width="3.500" stroke-linejoin="round"/><g transform="translate(17.900 18.300) scale(1.05) translate(-18.500 -17)"><path d="M11 8.300 C9.300 9.300 9 11.500 9.800 13.500 C12 19.500 16.500 24.200 22.500 26.500 C24.300 27.200 26.500 26.500 27.300 24.800 C27.800 23.500 27 22.300 25.800 21.600 L23 20 C22 19.500 21 19.800 20.500 20.500 C19.800 21.500 18.800 21.500 17.800 21 C15.800 19.800 14.500 18 13.800 16.300 C13.400 15.300 13.800 14.700 14.500 14.200 C15.500 13.500 15.500 12.500 15 11.500 L13.500 8.900 C12.900 7.900 11.800 7.800 11 8.300 Z" fill="#8526a6"/><path d="M18.500 7.500 C23.500 8 27 11.500 27.300 16.500 M19 11 C21.800 11.500 23.600 13.500 23.800 16.500" fill="none" stroke="#8526a6" stroke-width="1.700" stroke-linecap="round" opacity="0.8"/></g></g></svg>
<div class="t" style="left:301.02px;top:633.3px;font-size:22px;line-height:28px;color:#8b8b8b;transform:scaleX(0.9785);">Відправлення чека програмного РРО</div>
<div class="t" style="left:1065.03px;top:633.3px;font-size:22px;line-height:28px;color:#8b8b8b;transform:scaleX(0.9681);">Власник</div>
<div class="t" style="left:1172px;top:633.3px;font-size:22px;line-height:28px;color:#8b8b8b;transform:scaleX(0.9887);">Торговельна мережа</div>
<div class="t" style="left:1523.5px;top:633.3px;font-size:22px;line-height:28px;color:#8b8b8b;transform:scaleX(1.0725);">0%</div>
<div class="t" style="left:1655.5px;top:633.3px;font-size:22px;line-height:28px;color:#8b8b8b;transform:scaleX(1.0725);">0%</div>
<div class="t" style="left:1873.5px;top:633.3px;font-size:22px;line-height:28px;color:#8b8b8b;transform:scaleX(1.0725);">0%</div>
<div class="t" style="left:37.8px;top:677.1px;font-size:27px;line-height:30px;color:#4a8ff8;transform:scaleX(1.0111);">A</div>
<div class="t" style="left:78.91px;top:679.3px;font-size:22px;line-height:28px;color:#8b8b8b;transform:scaleX(1.0879);">27.07.2...</div>
<svg style="position:absolute;left:199.5px;top:675.8px" width="44" height="34" viewBox="199.5 675.8 44 34"><path d="M203.5 693.4 L214.3 702.8 L236.8 680" fill="none" stroke="#55c25f" stroke-width="4.5" stroke-linejoin="miter"/></svg>
<svg style="position:absolute;left:248.4px;top:668.5px" width="42" height="46" viewBox="248.4 668.5 42 46"><g transform="translate(250.4 671.2) scale(1.012 1.022)"><path d="M18 1.800 C6 1.800 1.800 6.500 1.800 16.500 C1.800 25 5 29.500 10.500 31 L10.800 38.500 L17 32.200 C29.500 32.500 34.200 27 34.200 16.500 C34.200 6.500 30 1.800 18 1.800 Z" fill="#fff" stroke="#8526a6" stroke-width="3.500" stroke-linejoin="round"/><g transform="translate(17.900 18.300) scale(1.05) translate(-18.500 -17)"><path d="M11 8.300 C9.300 9.300 9 11.500 9.800 13.500 C12 19.500 16.500 24.200 22.500 26.500 C24.300 27.200 26.500 26.500 27.300 24.800 C27.800 23.500 27 22.300 25.800 21.600 L23 20 C22 19.500 21 19.800 20.500 20.500 C19.800 21.500 18.800 21.500 17.800 21 C15.800 19.800 14.500 18 13.800 16.300 C13.400 15.300 13.800 14.700 14.500 14.200 C15.500 13.500 15.500 12.500 15 11.500 L13.500 8.900 C12.900 7.900 11.800 7.800 11 8.300 Z" fill="#8526a6"/><path d="M18.500 7.500 C23.500 8 27 11.500 27.300 16.500 M19 11 C21.800 11.500 23.600 13.500 23.800 16.500" fill="none" stroke="#8526a6" stroke-width="1.700" stroke-linecap="round" opacity="0.8"/></g></g></svg>
<div class="t" style="left:301.02px;top:679.3px;font-size:22px;line-height:28px;color:#8b8b8b;transform:scaleX(0.9785);">Відправлення чека програмного РРО</div>
<div class="t" style="left:1065.03px;top:679.3px;font-size:22px;line-height:28px;color:#8b8b8b;transform:scaleX(0.9681);">Власник</div>
<div class="t" style="left:1172px;top:679.3px;font-size:22px;line-height:28px;color:#8b8b8b;transform:scaleX(0.9887);">Торговельна мережа</div>
<div class="t" style="left:1523.5px;top:679.3px;font-size:22px;line-height:28px;color:#8b8b8b;transform:scaleX(1.0725);">0%</div>
<div class="t" style="left:1655.5px;top:679.3px;font-size:22px;line-height:28px;color:#8b8b8b;transform:scaleX(1.0725);">0%</div>
<div class="t" style="left:1873.5px;top:679.3px;font-size:22px;line-height:28px;color:#8b8b8b;transform:scaleX(1.0725);">0%</div>
<div class="t" style="left:37.8px;top:723.1px;font-size:27px;line-height:30px;color:#4a8ff8;transform:scaleX(1.0111);">A</div>
<div class="t" style="left:78.91px;top:725.3px;font-size:22px;line-height:28px;color:#8b8b8b;transform:scaleX(1.0879);">22.03.2...</div>
<svg style="position:absolute;left:199.5px;top:721.8px" width="44" height="34" viewBox="199.5 721.8 44 34"><path d="M203.5 739.4 L214.3 748.8 L236.8 726" fill="none" stroke="#55c25f" stroke-width="4.5" stroke-linejoin="miter"/></svg>
<svg style="position:absolute;left:248.4px;top:714.5px" width="42" height="46" viewBox="248.4 714.5 42 46"><g transform="translate(250.4 717.2) scale(1.012 1.022)"><path d="M18 1.800 C6 1.800 1.800 6.500 1.800 16.500 C1.800 25 5 29.500 10.500 31 L10.800 38.500 L17 32.200 C29.500 32.500 34.200 27 34.200 16.500 C34.200 6.500 30 1.800 18 1.800 Z" fill="#fff" stroke="#8526a6" stroke-width="3.500" stroke-linejoin="round"/><g transform="translate(17.900 18.300) scale(1.05) translate(-18.500 -17)"><path d="M11 8.300 C9.300 9.300 9 11.500 9.800 13.500 C12 19.500 16.500 24.200 22.500 26.500 C24.300 27.200 26.500 26.500 27.300 24.800 C27.800 23.500 27 22.300 25.800 21.600 L23 20 C22 19.500 21 19.800 20.500 20.500 C19.800 21.500 18.800 21.500 17.800 21 C15.800 19.800 14.500 18 13.800 16.300 C13.400 15.300 13.800 14.700 14.500 14.200 C15.500 13.500 15.500 12.500 15 11.500 L13.500 8.900 C12.900 7.900 11.800 7.800 11 8.300 Z" fill="#8526a6"/><path d="M18.500 7.500 C23.500 8 27 11.500 27.300 16.500 M19 11 C21.800 11.500 23.600 13.500 23.800 16.500" fill="none" stroke="#8526a6" stroke-width="1.700" stroke-linecap="round" opacity="0.8"/></g></g></svg>
<div class="t" style="left:301.02px;top:725.3px;font-size:22px;line-height:28px;color:#8b8b8b;transform:scaleX(0.9823);">Відправлення чеку програмного РРО</div>
<div class="t" style="left:1065.03px;top:725.3px;font-size:22px;line-height:28px;color:#8b8b8b;transform:scaleX(0.9681);">Власник</div>
<div class="t" style="left:1172px;top:725.3px;font-size:22px;line-height:28px;color:#8b8b8b;transform:scaleX(0.9887);">Торговельна мережа</div>
<div class="t" style="left:1523.5px;top:725.3px;font-size:22px;line-height:28px;color:#8b8b8b;transform:scaleX(1.0725);">0%</div>
<div class="t" style="left:1655.5px;top:725.3px;font-size:22px;line-height:28px;color:#8b8b8b;transform:scaleX(1.0725);">0%</div>
<div class="t" style="left:1873.5px;top:725.3px;font-size:22px;line-height:28px;color:#8b8b8b;transform:scaleX(1.0725);">0%</div>
<div style="position:absolute;left:2068px;top:410.5px;width:30px;height:192px;background:#c1c1c1;border-radius:4px"></div>
<svg style="position:absolute;left:2072px;top:330px" width="21" height="18" viewBox="2072 330 21 18"><path d="M2075.2 342.5 L2082.7 336.5 L2090.2 342.5" stroke="#555" stroke-width="3" fill="none"/></svg>
<svg style="position:absolute;left:2072px;top:746px" width="21" height="18" viewBox="2072 746 21 18"><path d="M2075.2 752 L2082.7 758 L2090.2 752" stroke="#555" stroke-width="3" fill="none"/></svg>
<div style="position:absolute;left:24px;top:781px;width:172px;height:46.5px;background:#e4e4e7"></div>
<div style="position:absolute;left:201.5px;top:781px;width:216.5px;height:46.5px;background:#e4e4e7"></div>
<div style="position:absolute;left:423.5px;top:781px;width:282.5px;height:46.5px;background:#e4e4e7"></div>
<svg style="position:absolute;left:39.5px;top:788.5px" width="44" height="34" viewBox="39.5 788.5 44 34"><path d="M43.5 805.52 L53.87 814.54 L75.47 792.65" fill="none" stroke="#55c25f" stroke-width="4.5" stroke-linejoin="miter"/></svg>
<div class="t" style="left:87.99px;top:792.5px;font-size:22px;line-height:28px;color:#707070;transform:scaleX(1.0092);">Виконана</div>
<svg style="position:absolute;left:218px;top:787px" width="42" height="36" viewBox="218 787 42 36"><rect x="220" y="789" width="36.700" height="27.200" rx="18.300" ry="13.600" fill="#f19a36"/><path d="M225 808 L224.1 819.4 L235 814.5 Z" fill="#f19a36"/><text x="239.2" y="809" font-family="Liberation Sans,sans-serif" font-weight="bold" font-size="16.5" fill="#fff" text-anchor="middle" textLength="26" lengthAdjust="spacingAndGlyphs">SMS</text></svg>
<div class="t" style="left:265.52px;top:792.5px;font-size:22px;line-height:28px;color:#707070;transform:scaleX(0.9810);">SMS-розсилка</div>
<div class="t" style="left:453.5px;top:790px;font-size:27px;line-height:30px;color:#4a8ff8;">A</div>
<div class="t" style="left:489.98px;top:792.5px;font-size:22px;line-height:28px;color:#707070;transform:scaleX(1.0221);">Одна мова розсилки</div>
<div style="position:absolute;left:18.5px;top:836px;width:2085px;height:3.5px;background:#bcbcbc"></div>
<div class="t" style="left:17.52px;top:843px;font-size:22px;line-height:28px;color:#707070;transform:scaleX(0.9816);">Статус Viber повідомлення</div>
<div class="inp" style="left:22.5px;top:873px;width:359.5px;height:48.5px"></div>
<svg style="position:absolute;left:345px;top:888px" width="24" height="20" viewBox="345 888 24 20"><path d="M348 894.7 L356.6 901.7 L365.2 894.7" stroke="#111" stroke-width="2.8" fill="none"/></svg>
<svg style="position:absolute;left:395px;top:885px" width="26" height="26" viewBox="395 885 26 26"><path d="M397.1 887 L418.3 908.2 M418.3 887 L397.1 908.2" stroke="#111" stroke-width="2.2" fill="none"/></svg>
<div class="t" style="left:899.53px;top:932px;font-size:22px;line-height:28px;color:#7d7d7d;transform:scaleX(0.9672);">Повідомлення масової розсилки</div>
<div class="inp" style="left:18.5px;top:966.2px;width:211.7px;height:51.2px"></div>
<svg style="position:absolute;left:147px;top:983px" width="21" height="21" viewBox="147 983 21 21"><path d="M149.7 985.7 L166.3 1002.3 M166.3 985.7 L149.7 1002.3" stroke="#111" stroke-width="2" fill="none"/></svg>
<svg style="position:absolute;left:187.8px;top:981.5px" width="25.5" height="25.5" viewBox="0 0 26 26"><circle cx="10.5" cy="10.500" r="8" fill="none" stroke="#111" stroke-width="2.8"/><path d="M16.5 16.500 L24 24" stroke="#111" stroke-width="3.0" stroke-linecap="round"/></svg>
<svg style="position:absolute;left:211px;top:988px" width="13.8" height="9.4" viewBox="211 988 13.8 9.4"><path d="M212.1 989.5 L222.9 989.5 L217.5 995.9 Z" fill="#111"/></svg>
<div style="position:absolute;left:250.3px;top:977.7px;width:2px;height:30px;background:#909090"></div>
<svg style="position:absolute;left:284px;top:973.5px" width="38" height="38" viewBox="0 0 38 38"><path d="M5.900 30.200 V23 L27.600 2.700 L34 9 L12.600 30.200 Z M23.200 7 L29.600 13.400" fill="none" stroke="#222" stroke-width="2.3" stroke-linejoin="miter"/><path d="M-0.500 35.100 H35.600" stroke="#222" stroke-width="2.3"/></svg>
<svg style="position:absolute;left:342.7px;top:976.8px" width="40" height="30" viewBox="342.7 976.8 40 30"><path d="M345.7 991.8 C351.7 976.8 373.7 976.8 379.7 991.8 C373.7 1006.8 351.7 1006.8 345.7 991.8 Z" fill="none" stroke="#222" stroke-width="2.5"/><circle cx="362.7" cy="992.1" r="5.600" fill="none" stroke="#222" stroke-width="2.8"/></svg>
<svg style="position:absolute;left:407px;top:973px" width="31" height="38" viewBox="0 0 31 38"><path d="M0 6.500 H31 M10 1.500 H21 M4.500 6.500 V35.500 H26.500 V6.500 M12 13 V29.500 M19 13 V29.500" fill="none" stroke="#e9483c" stroke-width="2.3"/></svg>
<svg style="position:absolute;left:475px;top:975.5px" width="34" height="34" viewBox="0 0 34 34"><path d="M3 15 A14 14 0 0 1 29 9" fill="none" stroke="#2b7bf8" stroke-width="2.7"/><path d="M30 1.500 V10.500 H21" fill="none" stroke="#2b7bf8" stroke-width="2.7"/><path d="M31 19 A14 14 0 0 1 5 25" fill="none" stroke="#2b7bf8" stroke-width="2.7"/><path d="M4 32.500 V23.500 H13" fill="none" stroke="#2b7bf8" stroke-width="2.7"/></svg>
<svg style="position:absolute;left:530px;top:971.5px" width="34" height="40" viewBox="530 971.5 34 40"><g transform="translate(0 703.5)"><path d="M539.800 273.400 H533.600 V304.700 H559 V273.400 H552.800" fill="none" stroke="#222" stroke-width="2.3" stroke-linejoin="round"/><rect x="539.800" y="271.600" width="13" height="5.300" rx="1.200" fill="none" stroke="#222" stroke-width="2.3"/><path d="M538.400 283.200 H553.900 M538.400 289.300 H548 M538.400 295.300 H544.300" stroke="#222" stroke-width="2.1" stroke-linecap="round"/></g></svg>
<svg style="position:absolute;left:567px;top:988px" width="13.4" height="9.5" viewBox="567 988 13.4 9.5"><path d="M568 989.85 L578.4 989.85 L573.2 996.35 Z" fill="#111"/></svg>
<svg style="position:absolute;left:593px;top:972px" width="44" height="44" viewBox="593 972 44 44"><path d="M-9.6 -2.4 L1.4 -2.4 A2.4 2.4 0 0 1 1.4 2.4 L-9.6 2.4 A9.9 9.9 0 0 0 9.5 2.8 L24.3 2.8 A2.8 2.8 0 0 0 24.3 -2.8 L9.5 -2.8 A9.9 9.9 0 0 0 -9.6 -2.4 Z" fill="none" stroke="#222" stroke-width="2.3" stroke-linejoin="round" transform="translate(607 986.6) rotate(42.5)"/></svg>
<div style="position:absolute;left:648.3px;top:977px;width:2px;height:30px;background:#909090"></div>
<svg style="position:absolute;left:670px;top:968px" width="50" height="50" viewBox="670 968 50 50"><g transform="translate(0 0)"><rect x="674" y="984" width="41" height="3.700" fill="#2b7bf8"/><path d="M683 985 L687.800 976.200 H700.600 L705 985" fill="none" stroke="#2b7bf8" stroke-width="3.500" stroke-linejoin="miter"/><path d="M677.600 987 L684 1005.800 H690.500" fill="none" stroke="#2b7bf8" stroke-width="3.700"/><path d="M692.500 1005.800 H698" fill="none" stroke="#2b7bf8" stroke-width="3.700"/><path d="M699.500 1005.800 H708" fill="none" stroke="#2b7bf8" stroke-width="3.700"/><path d="M706.500 999 L714 1006 L706.500 1013 Z" fill="#2b7bf8"/><path d="M712.600 987 L710.400 993" fill="none" stroke="#2b7bf8" stroke-width="3.700"/><path d="M709.800 994.500 L708.500 998" fill="none" stroke="#2b7bf8" stroke-width="3.700"/></g></svg>
<svg style="position:absolute;left:728px;top:966px" width="58" height="52" viewBox="728 966 58 52"><g transform="translate(0 0)"><path d="M738.67 989.35 A17.6 17.6 0 0 1 771.64 983.54" fill="none" stroke="#2b7bf8" stroke-width="3.900"/><path d="M773.53 994.25 A17.6 17.6 0 0 1 740.56 1000.06" fill="none" stroke="#2b7bf8" stroke-width="3.900"/><path d="M764 984.500 L780.500 984 L773 992.500 Z" fill="#2b7bf8"/><path d="M732 999.500 L748.200 999 L740.500 991.500 Z" fill="#2b7bf8"/><path d="M756.100 982 V996" stroke="#2b7bf8" stroke-width="3.800"/><path d="M748.300 994.700 H763.900 L756.100 1002.400 Z" fill="#2b7bf8"/></g></svg>
<svg style="position:absolute;left:800px;top:973px" width="36" height="40" viewBox="800 973 36 40"><circle cx="818.1" cy="983.7" r="8.4" fill="#5855d3"/><path d="M802.2 1007.6 V1003.5 A15.9 7.9 0 0 1 834 1003.5 V1007.6 Z" fill="#5855d3"/></svg>
<div style="position:absolute;left:18.2px;top:1022.3px;width:2085.7px;height:300.7px;background:#fff;border:2px solid #c6c6c6;box-sizing:border-box"></div>
<div style="position:absolute;left:22px;top:1025px;width:2012px;height:45px;background:#f0f0f0"></div>
<div style="position:absolute;left:422px;top:1025px;width:2px;height:138px;background:#c3c3c3"></div>
<div style="position:absolute;left:646px;top:1025px;width:2px;height:138px;background:#c3c3c3"></div>
<div style="position:absolute;left:888px;top:1025px;width:2px;height:138px;background:#c3c3c3"></div>
<div style="position:absolute;left:1180px;top:1025px;width:2px;height:138px;background:#c3c3c3"></div>
<div style="position:absolute;left:1584px;top:1025px;width:2px;height:138px;background:#c3c3c3"></div>
<div style="position:absolute;left:1910px;top:1025px;width:2px;height:138px;background:#c3c3c3"></div>
<div style="position:absolute;left:2034px;top:1025px;width:2px;height:138px;background:#c3c3c3"></div>
<div style="position:absolute;left:22px;top:1070px;width:2014px;height:2px;background:#c3c3c3"></div>
<div style="position:absolute;left:22px;top:1116px;width:2014px;height:2px;background:#c3c3c3"></div>
<div style="position:absolute;left:22px;top:1162px;width:2014px;height:2px;background:#c3c3c3"></div>
<div class="t" style="left:24.52px;top:1034.8px;font-size:22px;line-height:28px;color:#000;transform:scaleX(0.9817);">Кому</div>
<div class="t" style="left:425.5px;top:1034.8px;font-size:22px;line-height:28px;color:#000;transform:scaleX(0.9957);">Електронна адреса</div>
<div class="t" style="left:652.5px;top:1034.8px;font-size:22px;line-height:28px;color:#000;font-weight:bold;transform:scaleX(1.0643);">Телефон</div>
<div class="t" style="left:893.5px;top:1034.8px;font-size:22px;line-height:28px;color:#000;transform:scaleX(0.9165);">Змінив</div>
<div class="t" style="left:1183.96px;top:1034.8px;font-size:22px;line-height:28px;color:#000;transform:scaleX(1.0351);">Опис результату відправки</div>
<div class="t" style="left:1588.5px;top:1034.8px;font-size:22px;line-height:28px;color:#000;">Час фактичної відправки</div>
<div class="t" style="left:1982.53px;top:1034.8px;font-size:22px;line-height:28px;color:#000;transform:scaleX(0.9711);">Ціна</div>
<div style="position:absolute;left:22px;top:1071.5px;width:400px;height:44.5px;background:#60a0d2"></div>
<div class="t" style="left:28.52px;top:1080.7px;font-size:22px;line-height:28px;color:#e9f2fb;transform:scaleX(0.9843);">Кириленко Марина</div>
<div class="t" style="left:430.97px;top:1080.7px;font-size:22px;line-height:28px;color:#000;transform:scaleX(1.0280);">mariel.torgsoft@g...</div>
<div class="t" style="left:656.51px;top:1080.7px;font-size:22px;line-height:28px;color:#000;transform:scaleX(0.9941);">+380999426195</div>
<div class="t" style="left:896.54px;top:1080.7px;font-size:22px;line-height:28px;color:#000;transform:scaleX(0.9622);">Власник</div>
<div class="t" style="left:1188.01px;top:1080.7px;font-size:22px;line-height:28px;color:#000;transform:scaleX(0.9908);">Повідомлення прийнято в обробку</div>
<div class="t" style="left:1982.51px;top:1080.7px;font-size:22px;line-height:28px;color:#000;transform:scaleX(0.9860);">1,29</div>
<div class="t" style="left:29.52px;top:1126.7px;font-size:22px;line-height:28px;color:#000;transform:scaleX(0.9816);">Гладких Марія Сергіївна</div>
<div class="t" style="left:431.02px;top:1126.7px;font-size:22px;line-height:28px;color:#000;transform:scaleX(0.9783);">marielgrace14@gm...</div>
<div class="t" style="left:655.5px;top:1126.7px;font-size:22px;line-height:28px;color:#000;transform:scaleX(0.9786);">0939426195</div>
<div class="t" style="left:896.54px;top:1126.7px;font-size:22px;line-height:28px;color:#000;transform:scaleX(0.9622);">Власник</div>
<div class="t" style="left:1188.01px;top:1126.7px;font-size:22px;line-height:28px;color:#000;transform:scaleX(0.9908);">Повідомлення прийнято в обробку</div>
<div class="t" style="left:1982.51px;top:1126.7px;font-size:22px;line-height:28px;color:#000;transform:scaleX(0.9860);">1,29</div>
<div style="position:absolute;left:2068px;top:1061px;width:30px;height:110px;background:#c1c1c1;border-radius:4px"></div>
<svg style="position:absolute;left:2072px;top:1034px" width="21" height="18" viewBox="2072 1034 21 18"><path d="M2075.2 1046 L2082.7 1040 L2090.2 1046" stroke="#555" stroke-width="3" fill="none"/></svg>
<svg style="position:absolute;left:2072px;top:1294px" width="21" height="18" viewBox="2072 1294 21 18"><path d="M2075.2 1300 L2082.7 1306 L2090.2 1300" stroke="#555" stroke-width="3" fill="none"/></svg>
<div style="position:absolute;left:24px;top:1329.5px;width:106px;height:46.5px;background:#e4e4e7"></div>
<div style="position:absolute;left:135.5px;top:1329.5px;width:126.5px;height:46.5px;background:#e4e4e7"></div>
<div style="position:absolute;left:267.5px;top:1329.5px;width:216.5px;height:46.5px;background:#e4e4e7"></div>
<div class="t" style="left:40.41px;top:1340px;font-size:22px;line-height:28px;color:#111;font-weight:bold;transform:scaleX(1.0939);">К-сть</div>
<div class="t" style="left:110.59px;top:1340px;font-size:22px;line-height:28px;color:#111;transform:scaleX(0.9091);">2</div>
<div class="t" style="left:151.96px;top:1340px;font-size:22px;line-height:28px;color:#111;font-weight:bold;transform:scaleX(1.0427);">Ціна</div>
<div class="t" style="left:210.03px;top:1340px;font-size:22px;line-height:28px;color:#111;transform:scaleX(0.9740);">2,58</div>
<svg style="position:absolute;left:284px;top:1335.3px" width="42" height="36" viewBox="284 1335.3 42 36"><rect x="286" y="1337.3" width="36.700" height="27.200" rx="18.300" ry="13.600" fill="#f19a36"/><path d="M291 1356.3 L290.1 1367.7 L301 1362.8 Z" fill="#f19a36"/><text x="305.2" y="1357.3" font-family="Liberation Sans,sans-serif" font-weight="bold" font-size="16.5" fill="#fff" text-anchor="middle" textLength="26" lengthAdjust="spacingAndGlyphs">SMS</text></svg>
<div class="t" style="left:331.52px;top:1340px;font-size:22px;line-height:28px;color:#707070;transform:scaleX(0.9844);">SMS-розсилка</div>
<div style="position:absolute;left:18.5px;top:1384px;width:2085px;height:3.5px;background:#bcbcbc"></div>
</body></html>
